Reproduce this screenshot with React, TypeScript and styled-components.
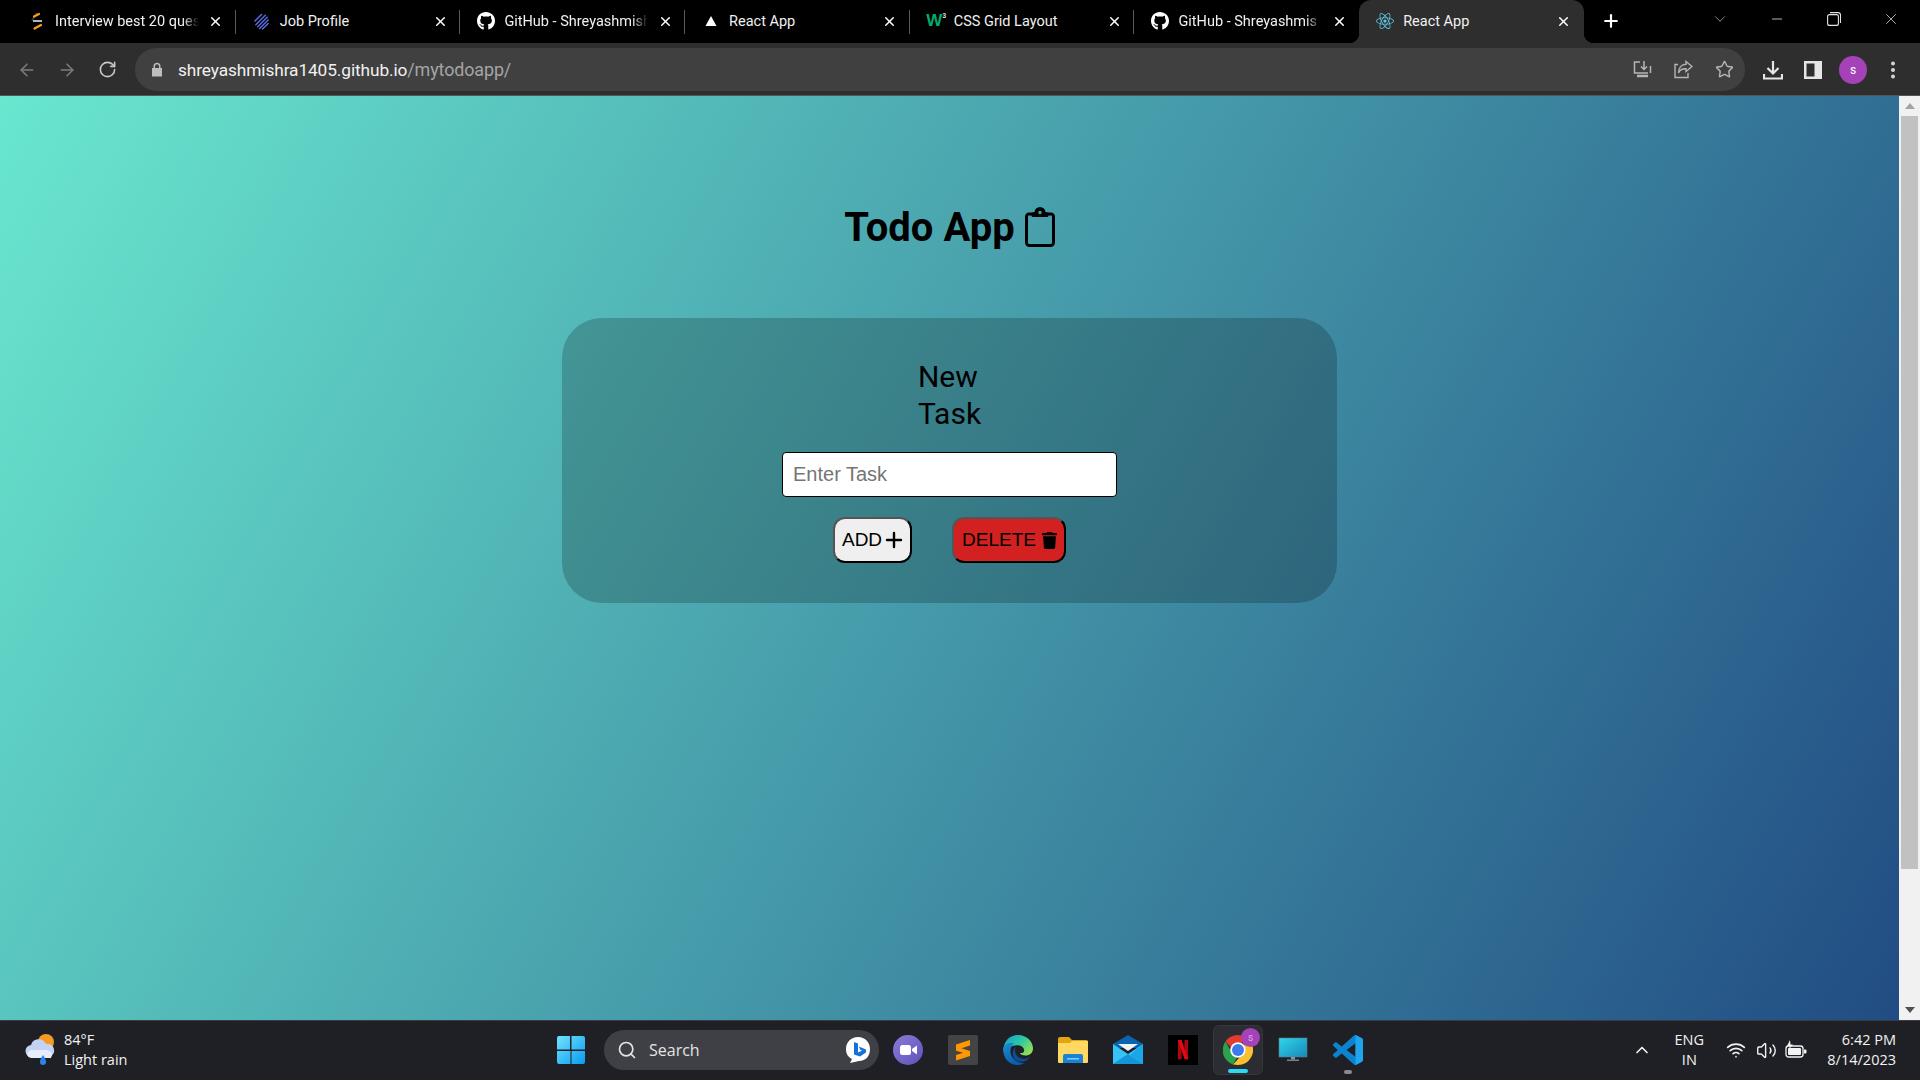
import React from "react";
import styled, { createGlobalStyle } from "styled-components";
import { ArrowLeft, ArrowRight, RotateCw, Star, X, Plus, ChevronDown, ChevronUp, Minus, Search as SearchGlyph, Wifi, Volume2 } from "lucide-react";
import { FaGithub, FaReact, FaTrash } from "react-icons/fa";

const Global = createGlobalStyle`
  html, body { margin: 0; padding: 0; height: 100%; overflow: hidden; }
  body { font-family: Roboto, "Liberation Sans", sans-serif; }
  * { box-sizing: border-box; }
`;

const Screen = styled.div`
  width: 100%; height: 100vh; display: flex; flex-direction: column; background: #000;
`;

/* ---------- browser chrome ---------- */
const TabStrip = styled.div`
  height: 43px; flex: none; display: flex; align-items: stretch; padding-left: 11px; background: #000; color: #fff;
`;
const Tab = styled.div<{ $active?: boolean }>`
  width: 224.7px; flex: none; position: relative; display: flex; align-items: center; gap: 9px;
  padding: 0 12px 1px 17px; font-size: 14.5px;
  background: ${p => (p.$active ? "#2e2e2e" : "transparent")};
  border-radius: ${p => (p.$active ? "12px 12px 0 0" : "0")};
  ${p => !p.$active && `
    &:not(.nosep)::after { content: ""; position: absolute; right: 0; top: 10px; height: 24px; width: 1px; background: #5a5a5a; }
  `}
  ${p => p.$active && `
    &::before, &::after { content: ""; position: absolute; bottom: 0; width: 10px; height: 10px; }
    &::before { left: -10px; background: radial-gradient(circle at 0 0, #000 10px, #2e2e2e 10.5px); }
    &::after { right: -10px; background: radial-gradient(circle at 100% 0, #000 10px, #2e2e2e 10.5px); }
  `}
`;
const Favicon = styled.span`
  width: 18px; height: 18px; flex: none; display: flex; align-items: center; justify-content: center;
`;
const W3Mark = styled.span`
  color: #04aa6d; font: 700 17px/18px "Liberation Sans", sans-serif; letter-spacing: -1px; white-space: nowrap;
  sup { font-size: 7px; line-height: 7px; color: #ddd; vertical-align: 8px; margin-left: 1px; }
`;
const TabTitle = styled.span<{ $fade?: boolean }>`
  flex: 1; min-width: 0; white-space: nowrap; color: #f1f1f1;
  ${p => p.$fade && `
    -webkit-mask-image: linear-gradient(to left, transparent 0, #000 16px);
    mask-image: linear-gradient(to left, transparent 0, #000 16px);
  `}
`;
const TabClose = styled.span`
  width: 16px; flex: none; display: flex; justify-content: center; color: #fff;
`;
const NewTab = styled.span`
  width: 54px; flex: none; display: flex; align-items: center; justify-content: center; padding-bottom: 1px;
`;
const WindowControls = styled.div`
  margin-left: auto; display: flex; align-items: center; padding: 0 1px 6px 0; color: #e2e2e2;
`;
const TabList = styled.span`
  width: 40px; display: flex; justify-content: center; margin-right: 8px; color: #bbb;
`;
const WinButton = styled.span`
  width: 57px; display: flex; justify-content: center;
`;

const Toolbar = styled.div`
  height: 53px; flex: none; display: flex; align-items: center; padding: 3px 7px 2px; background: #2e2e2e;
  border-bottom: 1px solid #555;
`;
const NavButton = styled.span<{ $dim?: boolean }>`
  width: 40px; flex: none; display: flex; justify-content: center; color: ${p => (p.$dim ? "#7d7d7d" : "#c9c9c9")};
`;
const AddressBar = styled.div`
  flex: 1; height: 43px; margin: 0 8px 0 8px; border-radius: 22px; background: #404040;
  display: flex; align-items: center; padding-left: 16px;
`;
const LockMark = styled.span`
  width: 12px; display: flex; margin-right: 15px; color: #bdbdbd;
`;
const Url = styled.span`
  font-size: 17.3px; color: #f1f1f1; white-space: nowrap; letter-spacing: -0.1px;
  span { color: #a5a5a5; font-size: 17.9px; }
`;
const BarActions = styled.div`
  margin-left: auto; display: flex; gap: 1px; padding-right: 1px;
`;
const BarIcon = styled.span<{ $bright?: boolean }>`
  width: 40px; flex: none; display: flex; justify-content: center; align-items: center; color: ${p => (p.$bright ? "#e6e6e6" : "#b5b5b5")};
`;
const Avatar = styled.span`
  width: 28px; height: 28px; border-radius: 50%; background: #a642b8; color: #fff;
  font-size: 12px; display: flex; align-items: center; justify-content: center;
`;

/* ---------- page ---------- */
const Viewport = styled.div`
  flex: 1; min-height: 0; display: flex;
`;
const Page = styled.main`
  flex: 1; min-width: 0; display: flex; flex-direction: column; align-items: center; padding-top: 108px;
  background: linear-gradient(120deg, #69e7cf 0%, #214c83 100%);
`;
const Title = styled.h1`
  margin: 0; height: 47px; display: flex; align-items: center; gap: 10px;
  font: 700 40px/47px Roboto, sans-serif; color: #000;
`;
const TitleIcon = styled.span`
  display: flex; margin-top: -2px;
`;
const Card = styled.section`
  width: 775px; height: 285px; margin-top: 67px; padding: 41px 0 40px; border-radius: 40px;
  background: rgba(0, 0, 0, 0.2); display: flex; flex-direction: column; align-items: center;
`;
const CardHeading = styled.h2`
  margin: 0; width: min-content; font: 400 30px/36.5px Roboto, sans-serif; color: #000;
`;
const TaskInput = styled.input`
  width: 335px; height: 45px; margin-top: 20px; padding: 0 10px; flex: none;
  border: 1px solid #000; border-radius: 4px; background: #fff; outline: none;
  font: 20px "Liberation Sans", Arial, sans-serif; color: #000;
  &::placeholder { color: #757575; }
`;
const ButtonRow = styled.div`
  margin-top: 20px; display: flex; gap: 40px;
`;
const ActionButton = styled.button<{ $danger?: boolean }>`
  height: 46px; display: flex; align-items: center;
  padding: ${p => (p.$danger ? "0 6px 0 8px" : "0 4px 0 7px")};
  gap: ${p => (p.$danger ? "5px" : "0")};
  border: 2px solid; border-color: #555 #000 #000 #555; border-radius: 12px;
  background: ${p => (p.$danger ? "#d32020" : "#efefef")}; color: #000;
  font: 19px "Liberation Sans", Arial, sans-serif;
`;

const Scrollbar = styled.div`
  width: 21px; flex: none; display: flex; flex-direction: column; align-items: center; background: #f1f1f1;
`;
const ScrollArrow = styled.span<{ $down?: boolean }>`
  flex: none; width: 0; height: 0; margin: 7px 0;
  border-left: 5px solid transparent; border-right: 5px solid transparent;
  ${p => (p.$down ? "border-top: 6px solid #505050; margin-top: auto;" : "border-bottom: 6px solid #a3a3a3;")}
`;
const ScrollThumb = styled.div`
  width: 17px; height: 753px; background: #c1c1c1; flex: none;
`;

/* ---------- taskbar ---------- */
const Taskbar = styled.footer`
  height: 60px; flex: none; display: grid; grid-template-columns: 1fr auto 1fr; align-items: center;
  padding-bottom: 1px; background: #1f2025; border-top: 1px solid #3c3d42; color: #fff;
`;
const Weather = styled.div`
  display: flex; align-items: center; gap: 8px; padding-left: 24px;
`;
const TwoLines = styled.div<{ $align?: string }>`
  display: flex; flex-direction: column; gap: 3px; margin-top: -1px;
  font: 14.5px/17px "Open Sans", sans-serif; color: #f2f2f2;
  text-align: ${p => p.$align || "left"};
`;
const Centre = styled.div`
  display: flex; align-items: center;
`;
const StartSlot = styled.span`
  width: 55px; display: flex; justify-content: center; margin-left: -2px; margin-right: 2px;
`;
const SearchBox = styled.div`
  width: 275px; height: 40px; margin: 0 1px 0 4px; border-radius: 20px; background: #3f4046;
  display: flex; align-items: center; padding: 0 8px 0 13px; gap: 12px; color: #e4e4e4;
  font: 16px "Open Sans", sans-serif;
`;
const BingSlot = styled.span`
  margin-left: auto; display: flex;
`;
const AppSlot = styled.span`
  width: 55px; height: 50px; display: flex; align-items: center; justify-content: center; position: relative;
`;
const ActiveFrame = styled.span`
  width: 50px; height: 50px; border-radius: 6px; background: #2c2d33; border: 1px solid #36373d;
  display: flex; align-items: center; justify-content: center;
`;
const Indicator = styled.span<{ $on?: boolean }>`
  position: absolute; bottom: ${p => (p.$on ? "2px" : "1px")}; left: 50%; height: 4px; border-radius: 2px;
  width: ${p => (p.$on ? "20px" : "8px")}; transform: translateX(-50%); background: ${p => (p.$on ? "#2bd8f5" : "#8b8b8b")};
`;
const Badge = styled.span`
  position: absolute; top: 3px; right: 5px; width: 19px; height: 19px; border-radius: 50%; background: #a642b8;
  color: #dca8e6; font-size: 10px; display: flex; align-items: center; justify-content: center;
`;
const Tray = styled.div`
  display: flex; align-items: center; justify-content: flex-end; padding-right: 24px;
`;
const TrayIcon = styled.span`
  width: 30px; display: flex; justify-content: center; color: #f2f2f2;
`;
const TrayChevron = styled(TrayIcon)`
  margin-right: 8px;
`;
const Language = styled.div`
  width: 48px; margin-right: 8px;
`;
const Clock = styled.div`
  margin-left: 16px;
`;

/* ---------- drawings ---------- */
const ForgeIcon = () => (
  <svg width="18" height="18" viewBox="0 0 18 18" fill="none">
    <path d="M9 1 4 8.5" stroke="#333" strokeWidth="2" />
    <path d="M5 9h9" stroke="#b5b5b5" strokeWidth="2" />
    <path d="M6 4.5 11 2M6.5 16.5 13 13" stroke="#f89f1b" strokeWidth="2.2" strokeLinecap="round" />
  </svg>
);
const StripesIcon = () => (
  <svg width="19" height="19" viewBox="0 0 19 19" fill="none" stroke="#5b6ee8" strokeWidth="1.5" strokeLinecap="round">
    <path d="M2 9 9 2M3 13 13 3M5 15 15 5M7 17l9-9M10 17.5l6-6" />
  </svg>
);
const Triangle = () => (
  <svg width="12" height="12" viewBox="0 0 12 12"><path d="M6 1l5.5 10H.5z" fill="#fff" /></svg>
);
const LockIcon = () => (
  <svg width="12" height="15" viewBox="0 0 12 15"><path d="M2.5 6V4.2a3.5 3.5 0 0 1 7 0V6H11v8.5H1V6zM4 6h4V4.2a2 2 0 0 0-4 0z" fill="currentColor" /></svg>
);
const InstallIcon = () => (
  <svg width="19" height="19" viewBox="0 0 19 19" fill="none" stroke="currentColor" strokeWidth="1.5">
    <path d="M7 2H1.5v11h13.500" /><path d="M11 1v8M8 6.5l3 3 3-3" /><path d="M17.5 6v7" /><path d="M4 16h11" strokeWidth="2.5" />
  </svg>
);
const ShareIcon = () => (
  <svg width="19" height="19" viewBox="0 0 19 19" fill="none" stroke="currentColor" strokeWidth="1.4">
    <path d="M4 4.5H1v13h13V13" /><path d="M12 1.5l6 5-6 5V8.8C8 8.6 5.6 10 4.5 13c0-5 2.8-8.5 7.5-8.7z" />
  </svg>
);
const DownloadIcon = () => (
  <svg width="20" height="20" viewBox="0 0 20 20" fill="none" stroke="currentColor" strokeWidth="2.2">
    <path d="M10 1v12M4.5 8l5.5 5.5L15.5 8" /><path d="M1 14v4.5h18V14" />
  </svg>
);
const SidePanelIcon = () => (
  <svg width="18" height="18" viewBox="0 0 18 18"><path d="M0 0h18v18H0z" fill="#e6e6e6" /><path d="M2.5 2.5h8v13h-8z" fill="#2e2e2e" /></svg>
);
const DotsIcon = () => (
  <svg width="6" height="18" viewBox="0 0 6 18" fill="#d5d5d5"><circle cx="3" cy="2.5" r="2" /><circle cx="3" cy="9" r="2" /><circle cx="3" cy="15.5" r="2" /></svg>
);
const RestoreIcon = () => (
  <svg width="14" height="14" viewBox="0 0 14 14" fill="none" stroke="currentColor" strokeWidth="1.1">
    <rect x=".6" y="2.6" width="10.8" height="10.8" rx="2" /><path d="M3 .6h8a2.5 2.5 0 0 1 2.5 2.5v8" />
  </svg>
);
const ClipboardIcon = () => (
  <svg width="30" height="40" viewBox="0 0 30 40" fill="none" stroke="#000" strokeWidth="3" strokeLinejoin="round">
    <path d="M8 7H4a2.5 2.5 0 0 0-2.5 2.5v26A3 3 0 0 0 4.5 38.500h21a3 3 0 0 0 3-3v-26A2.5 2.5 0 0 0 26 7h-4" />
    <path d="M8 8.5V7l3-1.500a4 4 0 0 1 8 0L22 7v1.500z" fill="#000" />
    <circle cx="15" cy="5.5" r="1.7" fill="#4a9aa8" stroke="none" />
  </svg>
);
const WeatherIcon = () => (
  <svg width="32" height="34" viewBox="0 0 32 34">
    <circle cx="22" cy="9" r="8" fill="#f59a23" />
    <path d="M8 24a6 6 0 0 1-1-12 8 8 0 0 1 15-1 6.5 6.5 0 0 1 3 13z" fill="#c3d2f5" />
    <path d="M3 22a5 5 0 0 1 5-5h15a5 5 0 0 1 4 8H7a5 5 0 0 1-4-3z" fill="#e6edfb" />
    <path d="M19 22c2 3 3 5 3 7a3 3 0 0 1-6 0c0-2 1-4 3-7z" fill="#2b84ea" />
  </svg>
);
const StartIcon = () => (
  <svg width="30" height="30" viewBox="0 0 30 30">
    <defs><linearGradient id="win" x1="0" y1="0" x2="1" y2="1"><stop offset="0" stopColor="#6fe3ff" /><stop offset="1" stopColor="#0a9bf0" /></linearGradient></defs>
    <path d="M1 3a2 2 0 0 1 2-2h11v13.5H1zM15.5 1H27a2 2 0 0 1 2 2v11.5H15.5zM1 16h13.5v13H3a2 2 0 0 1-2-2zM15.5 16H29v11a2 2 0 0 1-2 2H15.5z" fill="url(#win)" />
  </svg>
);
const BingIcon = () => (
  <svg width="26" height="28" viewBox="0 0 26 28">
    <path d="M13 1c7 0 12 5 12 12s-4 12-11 12l-9 2 2-4C3 21 1 18 1 13 1 6 6 1 13 1z" fill="#fff" />
    <path d="M9 6l4 1.5v9l4-2-2-1-1-3 7 3v3l-6 4-6-2z" fill="#1673d6" />
  </svg>
);
const MeetIcon = () => (
  <svg width="30" height="30" viewBox="0 0 30 30">
    <defs><linearGradient id="meet" x1="0" y1="0" x2="1" y2="1"><stop offset="0" stopColor="#8f79d9" /><stop offset="1" stopColor="#5a55b8" /></linearGradient></defs>
    <circle cx="15" cy="15" r="15" fill="url(#meet)" />
    <rect x="7" y="10" width="11" height="10" rx="2.5" fill="#fff" /><path d="M19 14l5-3.5v9L19 16z" fill="#fff" />
  </svg>
);
const SublimeIcon = () => (
  <svg width="30" height="30" viewBox="0 0 30 30">
    <rect width="30" height="30" rx="2" fill="#444" />
    <path d="M22 5v5.5L8 15V9.5z" fill="#ff9800" /><path d="M8 13l14 4.5v5L8 27v-5.5l7-2.3-7-2z" fill="#ff9800" transform="translate(0 -1.5)" />
  </svg>
);
const EdgeIcon = () => (
  <svg width="30" height="30" viewBox="0 0 30 30">
    <defs>
      <linearGradient id="ed1" x1="0" y1="0" x2="1" y2=".6"><stop offset="0" stopColor="#0d9fd8" /><stop offset=".6" stopColor="#31c9a0" /><stop offset="1" stopColor="#8fdc57" /></linearGradient>
      <linearGradient id="ed2" x1="0" y1="0" x2=".5" y2="1"><stop offset="0" stopColor="#1a8fd6" /><stop offset="1" stopColor="#0c59a4" /></linearGradient>
    </defs>
    <path d="M15 0c9 0 15 6.5 15 13.5 0 4.5-3.5 7-7.5 7-3 0-5.5-1-5.5-2.5 3 .5 4.5-1 4-3.5-.7-3.5-5-5-9-4C6 11.5 2 14 .3 17 0 7 6 0 15 0z" fill="url(#ed1)" />
    <path d="M.3 14C1 8.5 7 7 11.5 8.5 8 10.5 6.5 15 8 19.5c1.5 5 7 8.5 13.5 8.5-2 1.3-4.3 2-6.5 2C6 30 0 23 .3 14z" fill="url(#ed2)" />
    <path d="M13 12c-2 3-1 8 3 10.5 4 2.3 9 1.5 11-1-2 5-8 6.5-12.5 4.5C9 23.5 8 15.5 13 12z" fill="#0a4f96" />
  </svg>
);
const FolderIcon = () => (
  <svg width="30" height="30" viewBox="0 0 30 30">
    <path d="M0 4a2 2 0 0 1 2-2h9l3 3h14a2 2 0 0 1 2 2v6H0z" fill="#e3a50f" />
    <path d="M0 8h12l2-2h16v21a1 1 0 0 1-1 1H1a1 1 0 0 1-1-1z" fill="#ffd862" />
    <path d="M5 21a2 2 0 0 1 2-2h16a2 2 0 0 1 2 2v7H5z" fill="#1a82d4" /><path d="M9 23h12v1.5H9z" fill="#7fd0ff" />
  </svg>
);
const MailIcon = () => (
  <svg width="30" height="30" viewBox="0 0 30 30">
    <path d="M0 9 15 0l15 9v4H0z" fill="#0a63ad" />
    <path d="M5 9h20l-10 7z" fill="#eef2f5" />
    <path d="M0 9l15 10L30 9v20H0z" fill="#35c4f5" /><path d="M0 29l15-10 15 10z" fill="#1596dc" /><path d="M30 9v20L17 20z" fill="#1aa7e8" />
  </svg>
);
const NetflixIcon = () => (
  <svg width="30" height="30" viewBox="0 0 30 30">
    <rect width="30" height="30" fill="#000" />
    <path d="M10 5h3.5v19l-3.5.5zM16.5 5H20v19.5l-3.5-.5z" fill="#b00610" /><path d="M10 5h3.5l6.5 19.5-3.5-.5z" fill="#e50914" />
  </svg>
);
const ChromeIcon = () => (
  <svg width="30" height="30" viewBox="0 0 30 30">
    <path d="M15 0a15 15 0 0 1 13 7.5H15a7.5 7.5 0 0 0-7 5L2.5 6.5A15 15 0 0 1 15 0z" fill="#e33b2e" />
    <path d="M2.5 6.5 9 18a7.5 7.5 0 0 0 5 4.5l-4 7A15 15 0 0 1 2.5 6.5z" fill="#2ba24c" />
    <path d="M28 7.5A15 15 0 0 1 15 30l-5-.5 6.5-7a7.5 7.5 0 0 0 5-11 7 7 0 0 0-1.5-4z" fill="#fbc02d" />
    <circle cx="15" cy="15" r="7.8" fill="#fff" /><circle cx="15" cy="15" r="6" fill="#3b7bea" />
  </svg>
);
const MonitorIcon = () => (
  <svg width="30" height="30" viewBox="0 0 30 30">
    <defs><linearGradient id="mon" x1="0" y1="0" x2="1" y2="1"><stop offset="0" stopColor="#2fd6ea" /><stop offset="1" stopColor="#1788b8" /></linearGradient></defs>
    <rect x="1" y="3" width="28" height="19" fill="url(#mon)" stroke="#5f7884" strokeWidth=".6" />
    <path d="M13 22h4v2.5h-4z" fill="#8a959b" /><path d="M9 24.5h12V26H9z" fill="#75838a" />
  </svg>
);
const VSCodeIcon = () => (
  <svg width="30" height="30" viewBox="0 0 100 100">
    <path d="M96.5 10.8 75.9.9a6.2 6.2 0 0 0-7.1 1.2L29.3 38 12.1 25a4.2 4.2 0 0 0-5.3.2L1.3 30.2a4.2 4.2 0 0 0 0 6.2L16.2 50 1.3 63.6a4.2 4.2 0 0 0 0 6.2l5.5 5a4.2 4.2 0 0 0 5.3.2l17.2-13 39.5 35.9a6.2 6.2 0 0 0 7.1 1.2l20.6-9.9a6.2 6.2 0 0 0 3.5-5.6V16.4a6.2 6.2 0 0 0-3.5-5.6ZM75 72.7 45 50l30-22.7Z" fill="#0a84d0" />
    <path d="M75 0.5c1-.1 2 .1 2.9.5l18.6 9.8a6.2 6.2 0 0 1 3.5 5.6v67.2a6.2 6.2 0 0 1-3.5 5.6L78 98.9c-1 .5-2 .7-3 .6z" fill="#1fa4ee" />
  </svg>
);
const BatteryIcon = () => (
  <svg width="22" height="20" viewBox="0 0 22 20" fill="none">
    <path d="M5 0 2 6h3L3.5 10 8 4.5H5.5z" fill="#f2f2f2" />
    <rect x="1" y="6" width="17" height="11" rx="2.5" stroke="#f2f2f2" strokeWidth="1.3" />
    <rect x="3" y="8" width="13" height="7" rx="1" fill="#f2f2f2" /><path d="M19 9.5h1.500a1 1 0 0 1 1 1v2a1 1 0 0 1-1 1H19z" fill="#f2f2f2" />
  </svg>
);

const tabs: { icon: React.ReactNode; title: string; fade?: boolean; nosep?: boolean; active?: boolean }[] = [
  { icon: <ForgeIcon />, title: "Interview best 20 ques", fade: true },
  { icon: <StripesIcon />, title: "Job Profile" },
  { icon: <FaGithub size={22} color="#fff" />, title: "GitHub - Shreyashmish", fade: true },
  { icon: <Triangle />, title: "React App" },
  { icon: <W3Mark>W<sup>3</sup></W3Mark>, title: "CSS Grid Layout" },
  { icon: <FaGithub size={22} color="#fff" />, title: "GitHub - Shreyashmis", fade: true, nosep: true },
  { icon: <FaReact size={18} color="#61c8e8" />, title: "React App", active: true },
];

const apps: { node: React.ReactNode; key: string }[] = [
  { key: "meet", node: <MeetIcon /> },
  { key: "sublime", node: <SublimeIcon /> },
  { key: "edge", node: <EdgeIcon /> },
  { key: "folder", node: <FolderIcon /> },
  { key: "mail", node: <MailIcon /> },
  { key: "netflix", node: <NetflixIcon /> },
];

export default function App() {
  return (
    <Screen>
      <Global />
      <TabStrip>
        {tabs.map((t, i) => (
          <Tab key={i} $active={t.active} className={t.nosep ? "nosep" : undefined}>
            <Favicon>{t.icon}</Favicon>
            <TabTitle $fade={t.fade}>{t.title}</TabTitle>
            <TabClose><X size={15} strokeWidth={2.4} /></TabClose>
          </Tab>
        ))}
        <NewTab><Plus size={20} strokeWidth={2.6} /></NewTab>
        <WindowControls>
          <TabList><ChevronDown size={18} strokeWidth={1} /></TabList>
          <WinButton><Minus size={16} strokeWidth={1.2} /></WinButton>
          <WinButton><RestoreIcon /></WinButton>
          <WinButton><X size={18} strokeWidth={1} /></WinButton>
        </WindowControls>
      </TabStrip>
      <Toolbar>
        <NavButton $dim><ArrowLeft size={20} strokeWidth={1.8} /></NavButton>
        <NavButton $dim><ArrowRight size={20} strokeWidth={1.8} /></NavButton>
        <NavButton><RotateCw size={19} strokeWidth={2} /></NavButton>
        <AddressBar>
          <LockMark><LockIcon /></LockMark>
          <Url>shreyashmishra1405.github.io<span>/mytodoapp/</span></Url>
          <BarActions>
            <BarIcon><InstallIcon /></BarIcon>
            <BarIcon><ShareIcon /></BarIcon>
            <BarIcon><Star size={19} strokeWidth={1.8} /></BarIcon>
          </BarActions>
        </AddressBar>
        <BarIcon $bright><DownloadIcon /></BarIcon>
        <BarIcon $bright><SidePanelIcon /></BarIcon>
        <BarIcon $bright><Avatar>s</Avatar></BarIcon>
        <BarIcon $bright><DotsIcon /></BarIcon>
      </Toolbar>
      <Viewport>
        <Page>
          <Title>Todo App <TitleIcon><ClipboardIcon /></TitleIcon></Title>
          <Card>
            <CardHeading>New Task</CardHeading>
            <TaskInput placeholder="Enter Task" readOnly />
            <ButtonRow>
              <ActionButton>ADD<Plus size={24} strokeWidth={2.4} /></ActionButton>
              <ActionButton $danger>DELETE<FaTrash size={17} /></ActionButton>
            </ButtonRow>
          </Card>
        </Page>
        <Scrollbar>
          <ScrollArrow />
          <ScrollThumb />
          <ScrollArrow $down />
        </Scrollbar>
      </Viewport>
      <Taskbar>
        <Weather>
          <WeatherIcon />
          <TwoLines>
            <span>84°F</span>
            <span>Light rain</span>
          </TwoLines>
        </Weather>
        <Centre>
          <StartSlot><StartIcon /></StartSlot>
          <SearchBox>
            <SearchGlyph size={20} strokeWidth={2} />
            <span>Search</span>
            <BingSlot><BingIcon /></BingSlot>
          </SearchBox>
          {apps.map(a => <AppSlot key={a.key}>{a.node}</AppSlot>)}
          <AppSlot>
            <ActiveFrame><ChromeIcon /></ActiveFrame>
            <Badge>s</Badge>
            <Indicator $on />
          </AppSlot>
          <AppSlot><MonitorIcon /></AppSlot>
          <AppSlot><VSCodeIcon /><Indicator /></AppSlot>
        </Centre>
        <Tray>
          <TrayChevron><ChevronUp size={20} strokeWidth={2} /></TrayChevron>
          <Language><TwoLines $align="center"><span>ENG</span><span>IN</span></TwoLines></Language>
          <TrayIcon><Wifi size={20} strokeWidth={2} /></TrayIcon>
          <TrayIcon><Volume2 size={21} strokeWidth={1.6} /></TrayIcon>
          <TrayIcon><BatteryIcon /></TrayIcon>
          <Clock><TwoLines $align="right"><span>6:42 PM</span><span>8/14/2023</span></TwoLines></Clock>
        </Tray>
      </Taskbar>
    </Screen>
  );
}
